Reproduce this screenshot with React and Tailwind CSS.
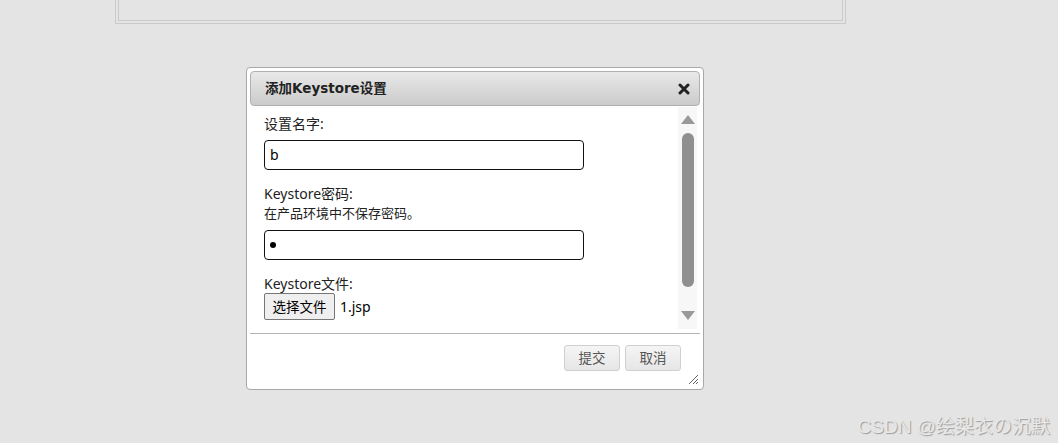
import React from "react";

const font = { fontFamily: '"Noto Sans", "Noto Sans CJK SC", sans-serif' };
const titleFont = { fontFamily: '"DejaVu Sans", "Noto Sans CJK SC", sans-serif' };

export default function App() {
  return (
    <div
      className="relative w-full h-[443px] bg-[#e4e4e4] overflow-hidden text-[#222]"
      style={font}
    >
      {/* top panel remnant */}
      <div className="ml-[115px] w-[731px] h-[24px] border border-t-0 border-[#cacaca] px-[2px] pb-[2px]">
        <div className="h-full border border-t-0 border-[#cacaca]" />
      </div>

      {/* dialog */}
      <div className="ml-[246px] mt-[43px] w-[458px] h-[323px] bg-white border border-[#a8a8a8] rounded-[4px] p-[3px] flex flex-col">
        {/* title bar */}
        <div className="h-[35px] shrink-0 flex items-center justify-between rounded-[4px] border border-[#b0b0b0] bg-gradient-to-b from-[#e9e9e9] to-[#cbcbcb] pl-[14px] pr-[9px]">
          <span className="text-[13.5px] font-bold text-[#222]" style={titleFont}>添加Keystore设置</span>
          <svg width="12" height="12" viewBox="0 0 12 12">
            <path d="M2 2 L10 10 M10 2 L2 10" stroke="#222" strokeWidth="3" strokeLinecap="round" />
          </svg>
        </div>

        {/* content */}
        <div className="h-[226px] shrink-0 flex mt-[1px]">
          <div className="flex-1 pl-[14px] pt-[8px] overflow-hidden text-[14px] leading-[18px] text-[#222]">
            <div>设置名字:</div>
            <div className="mt-[7px] w-[320px] h-[30px] border border-[#111] rounded-[4px] flex items-center px-[5px] text-[14px] text-black">
              b
            </div>
            <div className="mt-[15px]">Keystore密码:</div>
            <div className="text-[13px] mt-[1px]">在产品环境中不保存密码。</div>
            <div className="mt-[8px] w-[320px] h-[30px] border border-[#111] rounded-[4px] flex items-center px-[5px] text-black">
              <span className="block w-[6px] h-[6px] rounded-full bg-black" />
            </div>
            <div className="mt-[15px]">Keystore文件:</div>
            <div className="flex items-center">
              <div className="w-[71px] h-[27px] border border-[#767676] rounded-[2px] bg-[#efefef] flex items-center justify-center text-[13.5px] text-black">
                选择文件
              </div>
              <span className="ml-[5px] text-[14px] text-black">1.jsp</span>
            </div>
          </div>
          {/* scrollbar */}
          <div className="w-[19px] mr-[3px] mb-[4px] bg-[#f7f7f7] flex flex-col items-center">
            <svg className="mt-[8px]" width="14" height="9" viewBox="0 0 14 9">
              <path d="M7 0 L14 9 L0 9 Z" fill="#999" />
            </svg>
            <div className="mt-[9px] w-[12px] h-[154px] rounded-full bg-[#8f8f8f]" />
            <svg className="mt-[24px]" width="14" height="9" viewBox="0 0 14 9">
              <path d="M0 0 L14 0 L7 9 Z" fill="#999" />
            </svg>
          </div>
        </div>

        {/* separator */}
        <div className="h-px bg-[#b4b4b4] shrink-0" />

        {/* footer */}
        <div className="relative flex-1 flex justify-end items-start pt-[11px] pr-[19px] gap-[5px]">
          <div className="w-[56px] h-[26px] rounded-[3px] border border-[#d0d0d0] bg-gradient-to-b from-[#f5f5f5] to-[#e6e6e6] flex items-center justify-center text-[13.5px] text-[#555]">
            提交
          </div>
          <div className="w-[56px] h-[26px] rounded-[3px] border border-[#d0d0d0] bg-gradient-to-b from-[#f5f5f5] to-[#e6e6e6] flex items-center justify-center text-[13.5px] text-[#555]">
            取消
          </div>
          <svg className="absolute right-[1px] bottom-[1px]" width="12" height="12" viewBox="0 0 12 12">
            <path d="M11 2 L2 11 M11 6 L6 11 M11 9 L9 11" stroke="#666" strokeWidth="1" />
          </svg>
        </div>
      </div>

      {/* watermark */}
      <div
        className="absolute right-[8px] bottom-[4px] text-[19px] leading-[24px] text-[#e8e8e8]"
        style={{ textShadow: "1px 1px 1px #9a9a9a", fontFamily: '"Liberation Sans", "Noto Sans CJK SC", sans-serif' }}
      >
        CSDN @绘梨衣の沉默
      </div>
    </div>
  );
}
